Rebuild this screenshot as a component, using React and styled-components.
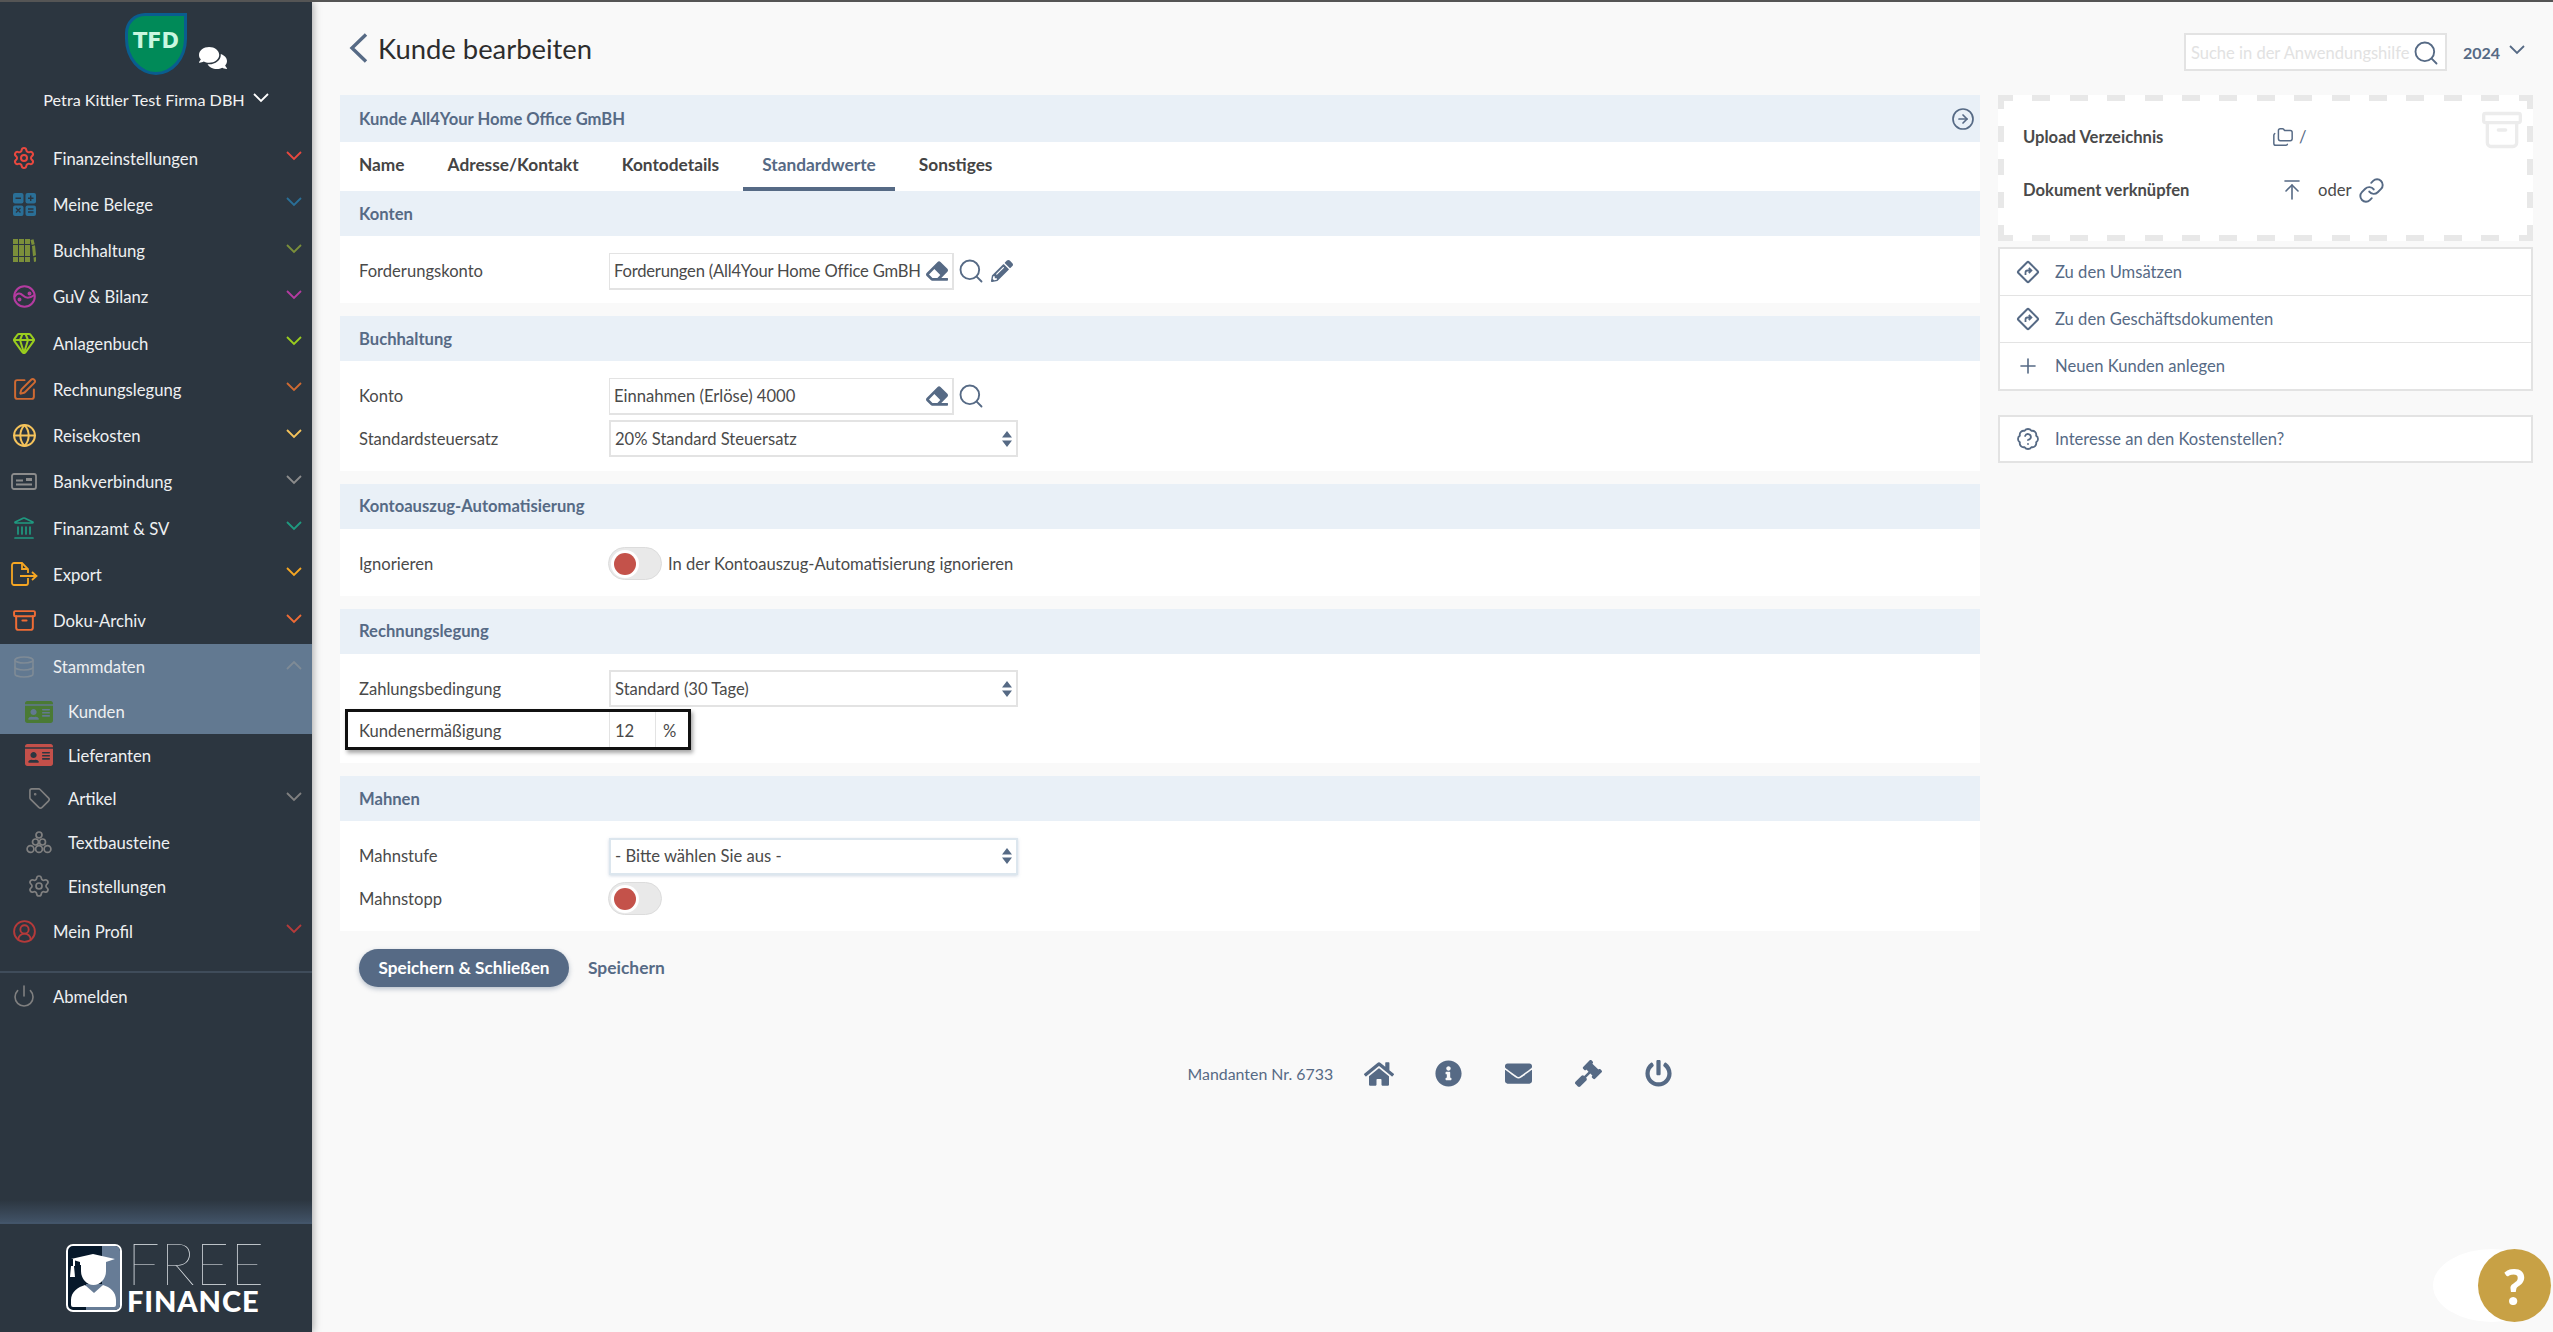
import React from 'react';
import styled, { createGlobalStyle } from 'styled-components';
import {
  Settings, Gem, SquarePen, Globe, Landmark, Archive, Database, Tag, CircleUserRound, Power,
  Search, CircleArrowRight, Folders, ArrowUpToLine, Link as LinkIcon, Plus, BadgeQuestionMark,
} from 'lucide-react';
import { FaComments, FaEraser, FaPencilAlt, FaHome, FaInfoCircle, FaEnvelope, FaGavel, FaPowerOff, FaIdCard } from 'react-icons/fa';

const FONT = `Lato, "Open Sans", sans-serif`;
const SLATE = '#566a85';

const GlobalStyle = createGlobalStyle`
  html, body { margin: 0; padding: 0; background: #f9f9f9; }
  *, *::before, *::after { box-sizing: border-box; }
  body { font-family: ${FONT}; font-size: 16.6px; color: #4a4a4a; }
`;

const Page = styled.div`
  display: flex;
  width: 2553px;
  height: 1332px;
  overflow: hidden;
  border-top: 2px solid #555;
  background: #f9f9f9;
`;

/* sidebar */
const Sidebar = styled.aside`
  width: 312px;
  flex: none;
  display: flex;
  flex-direction: column;
  background: #2c3640;
  color: #f2f2f2;
  box-shadow: 1px 0 8px rgba(0, 0, 0, 0.35);
`;
const Brand = styled.div`
  height: 133px;
  padding-top: 11px;
  display: flex;
  flex-direction: column;
`;
const BrandRow = styled.div`
  display: flex;
  padding-left: 125px;
  height: 62px;
`;
const Shield = styled.div`
  width: 62px;
  height: 62px;
  background: #008a58;
  border: 3px solid #0a5d8f;
  border-radius: 20px 0 31px 31px / 20px 0 36px 36px;
  display: flex;
  align-items: center;
  justify-content: center;
  padding-bottom: 6px;
  color: #c9f7e0;
  font-family: "DejaVu Sans", sans-serif;
  font-weight: 700;
  font-size: 21px;
`;
const Chat = styled.div`
  align-self: flex-end;
  margin-left: 12px;
  margin-bottom: 3px;
  color: #fff;
  font-size: 28px;
  line-height: 0;
`;
const Firm = styled.div`
  margin-top: 13px;
  display: flex;
  align-items: center;
  justify-content: center;
  gap: 8px;
  font-size: 16.2px;
  line-height: 24px;
`;
const Nav = styled.nav`
  flex: 1;
  display: flex;
  flex-direction: column;
`;
const ActiveGroup = styled.div`
  background: #627991;
`;
const NavRow = styled.div`
  display: flex;
  align-items: center;
  height: ${p => (p.$sub ? '43.6px' : '46.25px')};
  padding-left: ${p => (p.$sub ? '23px' : '8px')};
  padding-right: 10px;
  font-size: 16.7px;
`;
const NavIcon = styled.span`
  width: 32px;
  height: 30px;
  flex: none;
  display: flex;
  align-items: center;
  justify-content: center;
  color: ${p => p.$color};
`;
const NavLabel = styled.span`
  flex: 1;
  margin-left: 13px;
  padding-top: 1px;
  color: #eef0f2;
`;
const Divider = styled.div`
  height: 2px;
  margin-top: 17px;
  background: #3f4c5a;
`;
const SideFoot = styled.div`
  height: 110px;
  flex: none;
  position: relative;
  display: flex;
  padding: 20px 0 0 66px;
  border-top: 2px solid #43556a;
  &::before {
    content: '';
    position: absolute;
    left: 0;
    right: 0;
    top: -24px;
    height: 22px;
    background: linear-gradient(rgba(67, 85, 106, 0), rgba(67, 85, 106, 0.9));
  }
`;
const Wordmark = styled.div`
  margin-left: 5px;
  margin-top: -6px;
  display: flex;
  flex-direction: column;
  color: #fff;
`;
const WordThin = styled.span`
  display: block;
  font-weight: 100;
  font-size: 58px;
  line-height: 50px;
  letter-spacing: 0.8px;
  color: #e4e8ec;
`;
const WordBold = styled.span`
  display: block;
  font-weight: 900;
  font-size: 29px;
  line-height: 26px;
  letter-spacing: 0.9px;
`;

/* main */
const Main = styled.main`
  flex: 1;
  min-width: 0;
  padding-left: 28px;
  padding-right: 20px;
  display: flex;
  flex-direction: column;
`;
const TopBar = styled.header`
  height: 93px;
  flex: none;
  display: flex;
  align-items: flex-start;
  padding-top: 31px;
`;
const Title = styled.h1`
  flex: 1;
  margin: 0;
  display: flex;
  align-items: center;
  gap: 10px;
  height: 30px;
  padding-left: 9px;
  font-size: 27.4px;
  font-weight: 400;
  color: #2d2d2d;
`;
const HelpSearch = styled.div`
  width: 263px;
  height: 38px;
  border: 2px solid #e3e3e3;
  background: #fff;
  display: flex;
  align-items: center;
  justify-content: space-between;
  padding: 1px 5px 0;
  color: #e2e2e2;
  font-size: 16.5px;
  white-space: nowrap;
`;
const Year = styled.div`
  width: 86px;
  height: 38px;
  display: flex;
  align-items: center;
  justify-content: flex-end;
  gap: 9px;
  padding-right: 8px;
  color: ${SLATE};
  font-weight: 700;
  font-size: 16px;
`;
const Columns = styled.div`
  display: flex;
  gap: 18px;
`;
const FormCol = styled.div`
  width: 1640px;
  flex: none;
`;
const TitleBand = styled.div`
  height: 47px;
  display: flex;
  align-items: center;
  justify-content: space-between;
  padding: 0 5px 0 19px;
  background: #e9f0f7;
  color: ${SLATE};
  font-weight: 700;
`;
const Tabs = styled.div`
  height: 49px;
  display: flex;
  gap: 5px;
  background: #fff;
`;
const Tab = styled.div`
  display: flex;
  align-items: center;
  padding: 0 19px;
  font-size: 17.3px;
  font-weight: 700;
  color: ${p => (p.$active ? SLATE : '#444')};
  border-bottom: 4px solid ${p => (p.$active ? SLATE : 'transparent')};
`;
const Section = styled.section`
  margin-bottom: ${p => (p.$last ? '0' : '13px')};
  background: #fff;
`;
const SectionHead = styled.div`
  height: 45px;
  display: flex;
  align-items: center;
  padding-left: 19px;
  background: #e9f0f7;
  color: ${SLATE};
  font-weight: 700;
`;
const SectionBody = styled.div`
  display: flex;
  flex-direction: column;
  gap: 4.5px;
  padding: 16px 19px 13px;
`;
const Row = styled.div`
  position: relative;
  display: flex;
  align-items: center;
  height: 38px;
  ${p => p.$marked && `
    &::after {
      content: '';
      position: absolute;
      left: -14px;
      top: -3px;
      width: 346px;
      height: 41px;
      border: 3px solid #111;
      box-shadow: 2px 3px 4px rgba(0, 0, 0, 0.35);
      pointer-events: none;
    }
  `}
`;
const Label = styled.label`
  width: 250px;
  flex: none;
  color: #4a4a4a;
`;
const Field = styled.div`
  width: ${p => p.$width || '345px'};
  height: 37px;
  flex: none;
  display: flex;
  align-items: center;
  justify-content: space-between;
  padding: 0 4px 0 4px;
  background: #fff;
  border: 2px solid ${p => (p.$focus ? '#dce6ee' : '#e3e3e3')};
  border-width: 1px 2px 2px 1px;
  white-space: nowrap;
  overflow: hidden;
  ${p => p.$tight && 'letter-spacing: -0.2px;'}
  ${p => p.$focus && 'box-shadow: 0 1px 3px rgba(120, 150, 180, 0.35);'}
`;
const SelectField = styled(Field)`
  width: 409px;
  border-width: 2px;
`;
const Arrows = styled.svg`
  flex: none;
  color: ${SLATE};
`;
const FieldIcon = styled.span`
  display: inline-flex;
  align-items: center;
  justify-content: center;
  flex: none;
  color: ${SLATE};
  margin-left: ${p => p.$gap || '0'};
`;
const PercentField = styled.div`
  display: flex;
  align-items: center;
  height: 38px;
`;
const PercentValue = styled.span`
  width: 47px;
  height: 100%;
  padding-left: 5px;
  display: flex;
  align-items: center;
  border-left: 1px solid #e3e3e3;
  border-right: 1px solid #e3e3e3;
`;
const PercentUnit = styled.span`
  padding-left: 7px;
`;
const Toggle = styled.span`
  width: 54px;
  height: 33px;
  flex: none;
  margin-left: -1px;
  display: flex;
  align-items: center;
  padding-left: 5px;
  background: #e9e9e9;
  border: 1px solid #dcdcdc;
  border-radius: 17px;
  &::before {
    content: '';
    width: 22px;
    height: 22px;
    border-radius: 50%;
    background: #c4524a;
    box-shadow: 0 0 0 3px #fff;
  }
`;
const ToggleText = styled.span`
  margin-left: 6px;
`;
const Actions = styled.div`
  display: flex;
  align-items: center;
  gap: 19px;
  margin-top: 18px;
  padding-left: 19px;
`;
const SaveClose = styled.button`
  width: 210px;
  height: 38px;
  padding: 0;
  border: 0;
  border-radius: 19px;
  background: ${SLATE};
  color: #fff;
  font: 700 17.2px ${FONT};
  box-shadow: 0 2px 5px rgba(86, 106, 133, 0.4);
`;
const Save = styled.span`
  color: ${SLATE};
  font-weight: 700;
  font-size: 17.4px;
`;

/* right column */
const SideCol = styled.div`
  width: 535px;
  flex: none;
  display: flex;
  flex-direction: column;
`;
const DropZone = styled.div`
  position: relative;
  height: 146px;
  display: flex;
  flex-direction: column;
  padding: 30px 25px 0;
  background-color: #fff;
  background-image:
    repeating-linear-gradient(90deg, #e8e8e8 0 18px, transparent 18px 37.4px),
    repeating-linear-gradient(90deg, #e8e8e8 0 18px, transparent 18px 37.4px),
    repeating-linear-gradient(0deg, #e8e8e8 0 16px, transparent 16px 33px),
    repeating-linear-gradient(0deg, #e8e8e8 0 16px, transparent 16px 33px);
  background-size: 100% 6px, 100% 6px, 6px 100%, 6px 100%;
  background-position: -3px 0, -3px 100%, 0 0, 100% 0;
  background-repeat: no-repeat;
`;
const ZoneRow = styled.div`
  display: flex;
  align-items: center;
  height: 24px;
  margin-bottom: 29px;
`;
const ZoneLabel = styled.span`
  width: 249px;
  font-weight: 700;
  color: #4a4a4a;
`;
const ZoneValue = styled.span`
  display: flex;
  align-items: center;
  gap: 5px;
  color: ${SLATE};
`;
const Watermark = styled(Archive)`
  position: absolute;
  right: 9px;
  top: 13px;
  color: #ececec;
`;
const LinkList = styled.div`
  margin-top: 6px;
  background: #fff;
  border: 2px solid #e3e3e3;
  border-bottom-width: 1px;
`;
const Single = styled(LinkList)`
  margin-top: 24px;
  border-bottom-width: 2px;
`;
const LinkRow = styled.div`
  height: ${p => (p.$single ? '44px' : '47px')};
  display: flex;
  align-items: center;
  padding-left: 15px;
  color: ${SLATE};
  border-bottom: ${p => (p.$single ? '0' : '1px solid #e3e3e3')};
`;
const LinkIconBox = styled.span`
  width: 26px;
  display: flex;
  justify-content: center;
  margin-right: 14px;
`;

/* footer */
const Foot = styled.footer`
  margin-top: 69px;
  height: 36px;
  padding-left: 8px;
  display: flex;
  align-items: center;
  justify-content: center;
  color: ${SLATE};
`;
const FootText = styled.span`
  width: 156px;
  font-size: 15.9px;
`;
const FootIcon = styled.span`
  width: 70px;
  display: flex;
  justify-content: center;
  font-size: 28px;
  line-height: 0;
`;
const HelpBubble = styled.div`
  position: absolute;
  left: 2433px;
  top: 1249px;
  width: 118px;
  height: 73px;
  border-radius: 50%;
  background: #fff;
`;
const HelpButton = styled.button`
  position: absolute;
  left: 2478px;
  top: 1249px;
  width: 73px;
  height: 73px;
  border: 0;
  padding: 0;
  border-radius: 50%;
  background: #c8a145;
  color: #fff;
  font: 900 50px ${FONT};
`;

const Chevron = ({ color, up }) => (
  <svg width="16" height="10" viewBox="0 0 16 10" style={{ flex: 'none', marginTop: -4 }}>
    <polyline points={up ? '1,9 8,2 15,9' : '1,1 8,8 15,1'} fill="none" stroke={color} strokeWidth="1.8" />
  </svg>
);

const BackChevron = () => (
  <svg width="19" height="30" viewBox="0 0 19 30" style={{ flex: 'none' }}>
    <polyline points="17,1.500 3,15 17,28.500" fill="none" stroke={SLATE} strokeWidth="3.400" />
  </svg>
);

const GridIcon = () => (
  <svg width="23" height="23" viewBox="0 0 23 23">
    <g fill="currentColor">
      <rect x="0" y="0" width="10.5" height="10.5" rx="2" />
      <rect x="12.5" y="0" width="10.5" height="10.5" rx="2" />
      <rect x="0" y="12.5" width="10.5" height="10.5" rx="2" />
      <rect x="12.5" y="12.5" width="10.5" height="10.5" rx="2" />
    </g>
    <g stroke="#2c3640" strokeWidth="1.4">
      <path d="M2.5 5.2h5.5M15 5.2h5.5M17.7 2.5v5.5M3 15l4.5 4.5M7.5 15L3 19.5M15 16h5.5M15 19h5.5" />
    </g>
  </svg>
);

const BooksIcon = () => (
  <svg width="23" height="23" viewBox="0 0 23 23" fill="currentColor">
    <path d="M0 0h5v5H0zM0 6h5v11H0zM0 18h5v5H0zM6 0h5v5H6zM6 6h5v11H6zM6 18h5v5H6zM12 0h5v5h-5zM12 6h5v11h-5zM12 18h5v5h-5z" />
    <path d="M17.5 1l3 -.8 1.2 5-3 .8zM19 7l3-.8 1 10-3 1zM20.5 18.5l2.5-.5v4.5l-2 .5z" />
  </svg>
);

const YinYangIcon = () => (
  <svg width="23" height="23" viewBox="0 0 23 23" fill="none" stroke="currentColor" strokeWidth="2">
    <circle cx="11.5" cy="11.5" r="10.3" />
    <path d="M1.5 12c3-5 6-4 8.500-1.500s6 3.500 11.500 -.5" />
    <circle cx="6.500" cy="14.500" r="1" />
    <circle cx="16.500" cy="8.500" r="1" />
  </svg>
);

const BankCardIcon = () => (
  <svg width="26" height="17" viewBox="0 0 26 17" fill="none" stroke="currentColor" strokeWidth="1.800">
    <rect x="1" y="1" width="24" height="15" rx="2" />
    <path d="M5 7.500h7M5 11.500h16" />
    <rect x="15" y="5" width="6" height="3" fill="currentColor" stroke="none" />
  </svg>
);

const ExportIcon = () => (
  <svg width="27" height="24" viewBox="0 0 27 24" fill="none" stroke="currentColor" strokeWidth="1.800">
    <path d="M17 16v5a2 2 0 0 1-2 2H3a2 2 0 0 1-2-2V3a2 2 0 0 1 2-2h8l6 6v4" />
    <path d="M11 1v6h6M9 14h16M21 10l4.500 4-4.500 4" />
  </svg>
);

const CubesIcon = () => (
  <svg width="26" height="23" viewBox="0 0 26 23" fill="none" stroke="currentColor" strokeWidth="1.700">
    <circle cx="13" cy="4" r="3" />
    <circle cx="9.500" cy="11" r="3" />
    <circle cx="16.500" cy="11" r="3" />
    <circle cx="4.500" cy="18" r="3.400" />
    <circle cx="13" cy="18" r="3.400" />
    <circle cx="21.500" cy="18" r="3.400" />
  </svg>
);

const DirectionIcon = () => (
  <svg width="24" height="24" viewBox="0 0 24 24" fill="none" stroke={SLATE} strokeWidth="2">
    <rect x="4.500" y="4.500" width="15" height="15" rx="1.500" transform="rotate(45 12 12)" />
    <path d="M9.500 15v-2.500a2 2 0 0 1 2-2H15M12.800 8l2.600 2.500-2.600 2.500" strokeWidth="1.800" />
  </svg>
);

const SortArrows = () => (
  <Arrows width="10" height="16" viewBox="0 0 10 16" fill="currentColor">
    <path d="M5 0l5 6.500H0zM5 16l5-6.500H0z" />
  </Arrows>
);

const LogoMark = () => (
  <svg width="56" height="68" viewBox="0 0 56 68" style={{ flex: 'none' }}>
    <rect x="1" y="1" width="54" height="66" rx="6" fill="#06182a" stroke="#fff" strokeWidth="2" />
    <path d="M36 2h13a5 5 0 0 1 5 5v54a5 5 0 0 1-5 5H20V40h16z" fill="#677c96" />
    <path d="M5 15l22-5 22 5-9 3v3H14v-3l-5-1.400V22H7v-7z" fill="#fff" />
    <path d="M5 22h3l1 11H4z" fill="#fff" />
    <path d="M15 21h25v6c0 8-6 14-12.500 14S15 35 15 27z" fill="#fff" />
    <path d="M5 61v-5c0-8 7-13 14-15l9 8 9-8c7 2 13 7 13 15v5a2 2 0 0 1-2 2H7a2 2 0 0 1-2-2z" fill="#fff" />
  </svg>
);

const SOLID_CARD = size => <FaIdCard size={size} />;

const items = [
  { label: 'Finanzeinstellungen', color: '#e8483f', icon: <Settings size={24} strokeWidth={2} /> },
  { label: 'Meine Belege', color: '#2a6f97', icon: <GridIcon /> },
  { label: 'Buchhaltung', color: '#7b8f3a', icon: <BooksIcon /> },
  { label: 'GuV & Bilanz', color: '#b43ba0', icon: <YinYangIcon /> },
  { label: 'Anlagenbuch', color: '#9acd1e', icon: <Gem size={24} strokeWidth={2} /> },
  { label: 'Rechnungslegung', color: '#cf6a32', icon: <SquarePen size={25} strokeWidth={1.9} /> },
  { label: 'Reisekosten', color: '#f5c35b', icon: <Globe size={25} strokeWidth={1.9} /> },
  { label: 'Bankverbindung', color: '#8c8c8c', icon: <BankCardIcon /> },
  { label: 'Finanzamt & SV', color: '#1f9a80', icon: <Landmark size={24} strokeWidth={1.7} /> },
  { label: 'Export', color: '#f5a623', icon: <ExportIcon /> },
  { label: 'Doku-Archiv', color: '#ef6c35', icon: <Archive size={25} strokeWidth={1.9} /> },
];

const NavItem = ({ label, color, icon, sub, chevron, up }) => (
  <NavRow $sub={sub}>
    <NavIcon $color={color}>{icon}</NavIcon>
    <NavLabel>{label}</NavLabel>
    {chevron && <Chevron color={chevron} up={up} />}
  </NavRow>
);

const App = () => (
  <Page>
    <GlobalStyle />
    <Sidebar>
      <Brand>
        <BrandRow>
          <Shield>TFD</Shield>
          <Chat><FaComments /></Chat>
        </BrandRow>
        <Firm>
          Petra Kittler Test Firma DBH
          <Chevron color="#fff" />
        </Firm>
      </Brand>
      <Nav>
        {items.map(it => <NavItem key={it.label} {...it} chevron={it.color} />)}
        <ActiveGroup>
          <NavItem label="Stammdaten" color="#7f8b96" icon={<Database size={24} strokeWidth={1.6} />} chevron="#7f8b96" up />
          <NavItem sub label="Kunden" color="#4a7a35" icon={SOLID_CARD(28)} />
        </ActiveGroup>
        <NavItem sub label="Lieferanten" color="#c4504a" icon={SOLID_CARD(28)} />
        <NavItem sub label="Artikel" color="#808080" icon={<Tag size={23} strokeWidth={1.7} />} chevron="#808080" />
        <NavItem sub label="Textbausteine" color="#808080" icon={<CubesIcon />} />
        <NavItem sub label="Einstellungen" color="#808080" icon={<Settings size={24} strokeWidth={1.7} />} />
        <NavItem label="Mein Profil" color="#b53a3a" icon={<CircleUserRound size={25} strokeWidth={1.8} />} chevron="#b53a3a" />
        <Divider />
        <NavItem label="Abmelden" color="#808080" icon={<Power size={24} strokeWidth={1.6} />} />
      </Nav>
      <SideFoot>
        <LogoMark />
        <Wordmark>
          <WordThin>FREE</WordThin>
          <WordBold>FINANCE</WordBold>
        </Wordmark>
      </SideFoot>
    </Sidebar>

    <Main>
      <TopBar>
        <Title>
          <BackChevron />
          Kunde bearbeiten
        </Title>
        <HelpSearch>
          Suche in der Anwendungshilfe
          <FieldIcon><Search size={28} strokeWidth={1.6} /></FieldIcon>
        </HelpSearch>
        <Year>2024 <Chevron color={SLATE} /></Year>
      </TopBar>

      <Columns>
        <FormCol>
          <TitleBand>
            Kunde All4Your Home Office GmBH
            <FieldIcon><CircleArrowRight size={24} strokeWidth={1.7} /></FieldIcon>
          </TitleBand>
          <Tabs>
            <Tab>Name</Tab>
            <Tab>Adresse/Kontakt</Tab>
            <Tab>Kontodetails</Tab>
            <Tab $active>Standardwerte</Tab>
            <Tab>Sonstiges</Tab>
          </Tabs>

          <Section>
            <SectionHead>Konten</SectionHead>
            <SectionBody>
              <Row>
                <Label>Forderungskonto</Label>
                <Field $tight>
                  Forderungen (All4Your Home Office GmBH
                  <FieldIcon><FaEraser size={22} /></FieldIcon>
                </Field>
                <FieldIcon $gap="3px"><Search size={28} strokeWidth={1.6} /></FieldIcon>
                <FieldIcon $gap="6px"><FaPencilAlt size={22} /></FieldIcon>
              </Row>
            </SectionBody>
          </Section>

          <Section>
            <SectionHead>Buchhaltung</SectionHead>
            <SectionBody>
              <Row>
                <Label>Konto</Label>
                <Field>
                  Einnahmen (Erlöse) 4000
                  <FieldIcon><FaEraser size={22} /></FieldIcon>
                </Field>
                <FieldIcon $gap="3px"><Search size={28} strokeWidth={1.6} /></FieldIcon>
              </Row>
              <Row>
                <Label>Standardsteuersatz</Label>
                <SelectField>20% Standard Steuersatz<SortArrows /></SelectField>
              </Row>
            </SectionBody>
          </Section>

          <Section>
            <SectionHead>Kontoauszug-Automatisierung</SectionHead>
            <SectionBody>
              <Row>
                <Label>Ignorieren</Label>
                <Toggle />
                <ToggleText>In der Kontoauszug-Automatisierung ignorieren</ToggleText>
              </Row>
            </SectionBody>
          </Section>

          <Section>
            <SectionHead>Rechnungslegung</SectionHead>
            <SectionBody>
              <Row>
                <Label>Zahlungsbedingung</Label>
                <SelectField>Standard (30 Tage)<SortArrows /></SelectField>
              </Row>
              <Row $marked>
                <Label>Kundenermäßigung</Label>
                <PercentField>
                  <PercentValue>12</PercentValue>
                  <PercentUnit>%</PercentUnit>
                </PercentField>
              </Row>
            </SectionBody>
          </Section>

          <Section $last>
            <SectionHead>Mahnen</SectionHead>
            <SectionBody>
              <Row>
                <Label>Mahnstufe</Label>
                <SelectField $focus>- Bitte wählen Sie aus -<SortArrows /></SelectField>
              </Row>
              <Row>
                <Label>Mahnstopp</Label>
                <Toggle />
              </Row>
            </SectionBody>
          </Section>

          <Actions>
            <SaveClose>Speichern &amp; Schließen</SaveClose>
            <Save>Speichern</Save>
          </Actions>
        </FormCol>

        <SideCol>
          <DropZone>
            <Watermark size={44} strokeWidth={1.8} />
            <ZoneRow>
              <ZoneLabel>Upload Verzeichnis</ZoneLabel>
              <ZoneValue><Folders size={22} strokeWidth={1.6} /> /</ZoneValue>
            </ZoneRow>
            <ZoneRow>
              <ZoneLabel>Dokument verknüpfen</ZoneLabel>
              <ZoneValue>
                <FieldIcon $gap="8px"><ArrowUpToLine size={24} strokeWidth={1.6} /></FieldIcon>
                <FieldIcon $gap="9px" style={{ color: '#4a4a4a' }}>oder</FieldIcon>
                <FieldIcon $gap="1px"><LinkIcon size={27} strokeWidth={1.7} /></FieldIcon>
              </ZoneValue>
            </ZoneRow>
          </DropZone>
          <LinkList>
            <LinkRow><LinkIconBox><DirectionIcon /></LinkIconBox>Zu den Umsätzen</LinkRow>
            <LinkRow><LinkIconBox><DirectionIcon /></LinkIconBox>Zu den Geschäftsdokumenten</LinkRow>
            <LinkRow><LinkIconBox><Plus size={24} strokeWidth={1.6} /></LinkIconBox>Neuen Kunden anlegen</LinkRow>
          </LinkList>
          <Single>
            <LinkRow $single><LinkIconBox><BadgeQuestionMark size={24} strokeWidth={1.8} /></LinkIconBox>Interesse an den Kostenstellen?</LinkRow>
          </Single>
        </SideCol>
      </Columns>

      <Foot>
        <FootText>Mandanten Nr. 6733</FootText>
        <FootIcon><FaHome size={30} /></FootIcon>
        <FootIcon><FaInfoCircle size={27} /></FootIcon>
        <FootIcon><FaEnvelope size={27} /></FootIcon>
        <FootIcon><FaGavel size={27} /></FootIcon>
        <FootIcon><FaPowerOff size={27} /></FootIcon>
      </Foot>
    </Main>
    <HelpBubble />
    <HelpButton>?</HelpButton>
  </Page>
);

export default App;
